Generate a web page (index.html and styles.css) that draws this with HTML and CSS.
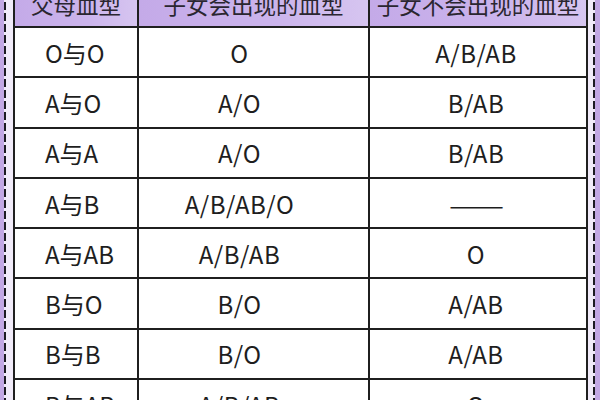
FILE: index.html
```html
<!DOCTYPE html>
<html lang="zh">
<head>
<meta charset="utf-8">
<link rel="stylesheet" href="styles.css">
</head>
<body>
<div class="frame">
  <div class="edge edge-l"></div>
  <div class="dash"></div>
  <div class="strip strip-l"></div>
  <div class="sheet">
    <table class="blood">
      <colgroup>
        <col class="c1"><col class="c2"><col class="c3">
      </colgroup>
      <thead>
        <tr><th>父母血型</th><th>子女会出现的血型</th><th>子女不会出现的血型</th></tr>
      </thead>
      <tbody>
        <tr><td>O与O</td><td>O</td><td>A/B/AB</td></tr>
        <tr><td>A与O</td><td>A/O</td><td>B/AB</td></tr>
        <tr><td>A与A</td><td>A/O</td><td>B/AB</td></tr>
        <tr><td>A与B</td><td>A/B/AB/O</td><td><span class="none">———</span></td></tr>
        <tr><td>A与AB</td><td>A/B/AB</td><td>O</td></tr>
        <tr><td>B与O</td><td>B/O</td><td>A/AB</td></tr>
        <tr><td>B与B</td><td>B/O</td><td>A/AB</td></tr>
        <tr><td>B与AB</td><td>A/B/AB</td><td>O</td></tr>
      </tbody>
    </table>
  </div>
  <div class="strip strip-r"></div>
  <div class="dash"></div>
  <div class="edge edge-r"></div>
</div>
</body>
</html>
```
FILE: styles.css
```css
html, body {
  margin: 0;
  padding: 0;
  width: 600px;
  height: 400px;
  overflow: hidden;
  background: #c2a7e4;
}

.frame {
  display: flex;
  align-items: stretch;
  margin-top: -20px;
  height: 440px;
}

.edge {
  background: #c2a7e4;
}
.edge-l { width: 4px; }
.edge-r { width: 5px; }

.dash {
  width: 2px;
  background: repeating-linear-gradient(to bottom, #1c1a22 0 8px, #efe8f8 8px 11px);
}

.strip {
  background: #f1ebf9;
}
.strip-l { width: 7px; }
.strip-r { width: 5px; }

.sheet {
  flex: 1;
  background: #ffffff;
}

.blood {
  width: 100%;
  table-layout: fixed;
  border-collapse: collapse;
  font-family: "Noto Sans CJK SC", "Noto Sans", sans-serif;
  color: #1e1e1e;
}

.c1 { width: 124px; }
.c2 { width: 231px; }

.blood th, .blood td {
  border: 2px solid #1f1f1f;
  padding: 0;
  text-align: center;
  vertical-align: middle;
}

.blood th {
  height: 44px;
  font-size: 22.5px;
  font-weight: 400;
  color: #2a2630;
  background: linear-gradient(to right, #c4aae8 0%, #cbb4ec 60%, #d6c5f0 100%);
}

.blood td {
  height: 48.3px;
  font-size: 24px;
  font-weight: 400;
  letter-spacing: 0.5px;
}

.blood td:nth-child(1) {
  text-align: left;
  padding-left: 30px;
  letter-spacing: 0;
}

.blood td:nth-child(2) {
  padding-right: 28px;
}

.blood td:nth-child(3) {
  padding-right: 4px;
}

.none {
  font-size: 22px;
  letter-spacing: -1px;
}
```
